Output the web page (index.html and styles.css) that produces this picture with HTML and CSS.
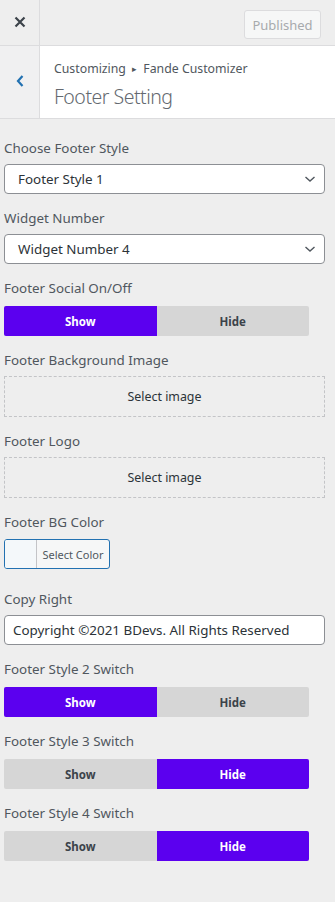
FILE: index.html
```html
<!DOCTYPE html>
<html lang="en">
<head>
    <meta charset="UTF-8">
    <meta name="viewport" content="width=device-width, initial-scale=1.0">
    <title>Customizer - Footer Setting</title>
    <link rel="stylesheet" href="styles.css">
</head>
<body>
    <div class="top-bar">
        <button class="close-btn" aria-label="Close">
            <svg width="12" height="12" viewBox="0 0 12 12"><path d="M1.5 1.5 L10.5 10.5 M10.5 1.5 L1.5 10.5" stroke="#3c434a" stroke-width="2.2" fill="none"/></svg>
        </button>
        <div class="top-actions">
            <button class="publish-btn" disabled>Published</button>
        </div>
    </div>

    <div class="section-head">
        <button class="back-btn" aria-label="Back">
            <svg width="10" height="14" viewBox="0 0 10 14"><path d="M7.5 2 L3 7 L7.5 12" stroke="#2271b1" stroke-width="2.2" fill="none"/></svg>
        </button>
        <div class="section-title">
            <div class="crumbs">Customizing <span class="sep">&#9656;</span> Fande Customizer</div>
            <h2>Footer Setting</h2>
        </div>
    </div>

    <div class="controls">
        <div class="control">
            <label>Choose Footer Style</label>
            <div class="select">Footer Style 1 <svg width="12" height="8" viewBox="0 0 12 8"><path d="M1.5 2 L6 6 L10.5 2" stroke="#50575e" stroke-width="1.4" fill="none"/></svg></div>
        </div>

        <div class="control">
            <label>Widget Number</label>
            <div class="select">Widget Number 4 <svg width="12" height="8" viewBox="0 0 12 8"><path d="M1.5 2 L6 6 L10.5 2" stroke="#50575e" stroke-width="1.4" fill="none"/></svg></div>
        </div>

        <div class="control switch-control">
            <label>Footer Social On/Off</label>
            <div class="switch">
                <span class="on">Show</span>
                <span>Hide</span>
            </div>
        </div>

        <div class="control">
            <label>Footer Background Image</label>
            <div class="upload">Select image</div>
        </div>

        <div class="control">
            <label>Footer Logo</label>
            <div class="upload">Select image</div>
        </div>

        <div class="control color-control">
            <label>Footer BG Color</label>
            <button class="color-btn"><span class="swatch"></span><span class="color-text">Select Color</span></button>
        </div>

        <div class="control">
            <label>Copy Right</label>
            <div class="text-input">Copyright ©2021 BDevs. All Rights Reserved</div>
        </div>

        <div class="control switch-control">
            <label>Footer Style 2 Switch</label>
            <div class="switch">
                <span class="on">Show</span>
                <span>Hide</span>
            </div>
        </div>

        <div class="control switch-control">
            <label>Footer Style 3 Switch</label>
            <div class="switch">
                <span>Show</span>
                <span class="on">Hide</span>
            </div>
        </div>

        <div class="control switch-control">
            <label>Footer Style 4 Switch</label>
            <div class="switch">
                <span>Show</span>
                <span class="on">Hide</span>
            </div>
        </div>
    </div>
</body>
</html>
```

FILE: styles.css
```css
body {
    margin: 0;
    background-color: #eeeeee;
    font-family: "Noto Sans", "Open Sans", sans-serif;
    color: #50575e;
}

button {
    font-family: inherit;
}

.top-bar {
    display: flex;
    height: 45px;
    border-bottom: 1px solid #dcdcde;
}

.close-btn {
    width: 40px;
    height: 45px;
    padding: 0 0 2px 0;
    border: none;
    border-right: 1px solid #dcdcde;
    background: #eeeeee;
    display: flex;
    align-items: center;
    justify-content: center;
}

.top-actions {
    flex: 1;
    display: flex;
    justify-content: flex-end;
    align-items: flex-start;
    padding: 10px 14px 0 0;
}

.publish-btn {
    height: 29px;
    width: 77px;
    padding: 0;
    font-size: 13px;
    color: #a7aaad;
    background: #f6f7f7;
    border: 1px solid #dcdcde;
    border-radius: 3px;
}

.section-head {
    display: flex;
    height: 72px;
    border-bottom: 1px solid #dcdcde;
    background: #ffffff;
}

.back-btn {
    width: 40px;
    padding: 0 0 2px 0;
    border: none;
    border-right: 1px solid #dcdcde;
    background: #f0f0f1;
    display: flex;
    align-items: center;
    justify-content: center;
}

.section-title {
    padding: 13px 0 0 14px;
}

.crumbs {
    font-size: 12.3px;
    line-height: 20px;
    color: #50575e;
}

.crumbs .sep {
    font-size: 9px;
    margin: 0 3px;
    position: relative;
    top: -1px;
}

.section-title h2 {
    margin: 4px 0 0 0;
    font-size: 19.5px;
    font-weight: 300;
    letter-spacing: -0.5px;
    line-height: 26px;
    color: #646970;
}

.controls {
    padding: 19px 10px 20px 4px;
}

.control {
    margin-bottom: 14px;
}

.control label {
    display: block;
    font-size: 13.4px;
    line-height: 20px;
    margin-bottom: 6px;
    color: #50575e;
}

.switch-control label {
    margin-bottom: 8px;
}

.select {
    display: flex;
    justify-content: space-between;
    align-items: center;
    height: 28px;
    padding: 0 8px 0 13px;
    background: #ffffff;
    border: 1px solid #8c8f94;
    border-radius: 4px;
    font-size: 13.4px;
    color: #2c3338;
}

.switch {
    display: flex;
    width: 305px;
    height: 30px;
    border-radius: 2px;
    overflow: hidden;
    background: #d6d6d6;
}

.switch span {
    flex: 1;
    display: flex;
    align-items: center;
    justify-content: center;
    font-size: 11.5px;
    font-weight: 700;
    color: #3c434a;
}

.switch span.on {
    background: #5b00ef;
    color: #ffffff;
}

.upload {
    height: 39px;
    border: 1px dashed #c3c4c7;
    display: flex;
    align-items: center;
    justify-content: center;
    font-size: 12.4px;
    color: #2c3338;
    margin-bottom: 1px;
}

.color-control label {
    margin-bottom: 7px;
}

.color-control {
    margin-bottom: 20px;
}

.color-btn {
    display: flex;
    height: 30px;
    width: 106px;
    padding: 0;
    border: 1px solid #2271b1;
    border-radius: 3px;
    background: #f6f7f7;
    overflow: hidden;
}

.swatch {
    width: 31px;
    height: 100%;
    background: #f4f8fa;
    border-right: 1px solid #c3c4c7;
}

.color-text {
    flex: 1;
    align-self: center;
    font-size: 11px;
    color: #50575e;
}

.text-input {
    height: 28px;
    padding: 0 8px;
    display: flex;
    align-items: center;
    background: #ffffff;
    border: 1px solid #8c8f94;
    border-radius: 4px;
    font-size: 13.4px;
    color: #2c3338;
}
```
